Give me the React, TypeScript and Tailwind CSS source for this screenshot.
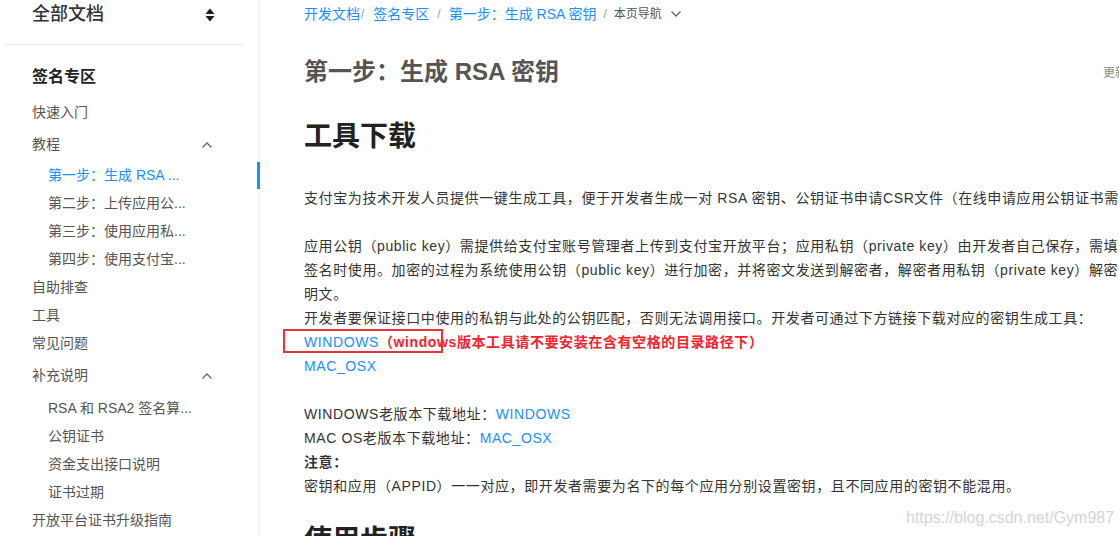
import React from "react";

const FONT = { fontFamily: '"Liberation Sans", Arial, "Noto Sans CJK SC", sans-serif' };

function Chevron({ up = true }: { up?: boolean }) {
  return (
    <svg width="12" height="8" viewBox="0 0 12 8" fill="none" stroke="#666" strokeWidth="1.3">
      {up ? <path d="M1.5 6.5 L6 2 L10.5 6.5" /> : <path d="M1.5 1.5 L6 6 L10.5 1.5" />}
    </svg>
  );
}

function SortIcon() {
  return (
    <svg width="10" height="14" viewBox="0 0 10 14" fill="#1a1a2e">
      <path d="M5 0.5 L9.5 6 L0.5 6 Z" />
      <path d="M0.5 8 L9.5 8 L5 13.5 Z" />
    </svg>
  );
}

function Sidebar() {
  const top = "h-[28px] flex items-center pl-8 pr-[46px] text-[14px] text-[#555] justify-between";
  const sub = "h-[28px] flex items-center pl-12 text-[14px] text-[#555] whitespace-nowrap";
  return (
    <aside className="w-[260px] shrink-0 border-r border-[#ececec] relative h-[536px]">
      <div className="h-[44px] flex items-start pt-[2px] pl-8 pr-[44px] justify-between">
        <span className="text-[18px] text-[#333] leading-[24px] font-medium">全部文档</span>
        <span className="mt-[6px]"><SortIcon /></span>
      </div>
      <div className="ml-[4px] w-[240px] h-px bg-[#eeeeee]" />
      <div className="pl-8 pt-[21px] h-[66px] text-[16px] font-bold text-[#222] leading-[22px]">签名专区</div>
      <div className="-mt-[14px]">
        <div className={top + " h-[31px]"}>快速入门</div>
        <div className={top + " h-[33px]"}><span>教程</span><Chevron /></div>
        <div className={sub + " text-[#1890ff]"}>第一步：生成 RSA ...</div>
        <div className={sub}>第二步：上传应用公...</div>
        <div className={sub}>第三步：使用应用私...</div>
        <div className={sub}>第四步：使用支付宝...</div>
        <div className={top}>自助排查</div>
        <div className={top}>工具</div>
        <div className={top}>常见问题</div>
        <div className={top + " h-[37px]"}><span>补充说明</span><Chevron /></div>
        <div className={sub + " h-[28px]"}>RSA 和 RSA2 签名算...</div>
        <div className={sub}>公钥证书</div>
        <div className={sub}>资金支出接口说明</div>
        <div className={sub}>证书过期</div>
        <div className={top}>开放平台证书升级指南</div>
      </div>
      <div className="absolute right-[-1px] top-[162px] w-[3px] h-[27px] bg-[#1890ff]" />
    </aside>
  );
}

function Main() {
  const link = "text-[#1890ff]";
  return (
    <main className="flex-1 relative overflow-hidden pl-[44px] h-[536px]">
      <div className="h-[28px] flex items-center text-[14px] whitespace-nowrap">
        <span className={link}>开发文档</span>
        <span className="text-[#999] text-[12px] ml-[1px] mr-[9px]">/</span>
        <span className={link}>签名专区</span>
        <span className="text-[#999] text-[12px] mx-[8px]">/</span>
        <span className={link}>第一步：生成 RSA 密钥</span>
        <span className="text-[#999] text-[12px] mx-[7px]">/</span>
        <span className="text-[12px] text-[#555]">本页导航</span>
        <span className="ml-[8px] flex items-center"><Chevron up={false} /></span>
      </div>
      <h1 className="text-[24px] font-bold text-[#555] leading-[30px] mt-[29px] whitespace-nowrap">第一步：生成 RSA 密钥</h1>
      <span className="absolute left-[843px] top-[64px] text-[12px] text-[#888] whitespace-nowrap">更新时间</span>
      <h2 className="text-[28px] font-bold text-[#222] leading-[36px] mt-[32px]">工具下载</h2>
      <div className="text-[14px] text-[#333] leading-[24px] whitespace-nowrap mt-[31px] tracking-[0.6px]">
        <p>支付宝为技术开发人员提供一键生成工具，便于开发者生成一对 RSA 密钥、公钥证书申请CSR文件（在线申请应用公钥证书需要上传 CSR 文件）。</p>
        <p className="mt-[24px]">应用公钥（public key）需提供给支付宝账号管理者上传到支付宝开放平台；应用私钥（private key）由开发者自己保存，需填写到代码中供</p>
        <p>签名时使用。加密的过程为系统使用公钥（public key）进行加密，并将密文发送到解密者，解密者用私钥（private key）解密，将密文解为</p>
        <p>明文。</p>
        <p>开发者要保证接口中使用的私钥与此处的公钥匹配，否则无法调用接口。开发者可通过下方链接下载对应的密钥生成工具：</p>
        <p className="relative">
          <span className={link}>WINDOWS</span>
          <span className="text-[#f5222d] font-bold">（windows版本工具请不要安装在含有空格的目录路径下）</span>
          <span className="absolute left-[-21px] top-[-1px] w-[160px] h-[24px] border-2 border-[#e8323c]" />
        </p>
        <p className={link}>MAC_OSX</p>
        <p className="mt-[24px]">WINDOWS老版本下载地址：<span className={link}>WINDOWS</span></p>
        <p>MAC OS老版本下载地址：<span className={link}>MAC_OSX</span></p>
        <p className="font-bold">注意：</p>
        <p>密钥和应用（APPID）一一对应，即开发者需要为名下的每个应用分别设置密钥，且不同应用的密钥不能混用。</p>
      </div>
      <h2 className="text-[28px] font-bold text-[#222] leading-[36px] mt-[25px]">使用步骤</h2>
      <span className="absolute left-[646px] top-[506px] text-[16px] text-[#d4d4d4] whitespace-nowrap">https://blog.csdn.net/Gym987</span>
    </main>
  );
}

export default function App() {
  return (
    <div className="w-[1119px] h-[536px] overflow-hidden bg-white flex [text-spacing-trim:space-all]" style={FONT}>
      <Sidebar />
      <Main />
    </div>
  );
}
